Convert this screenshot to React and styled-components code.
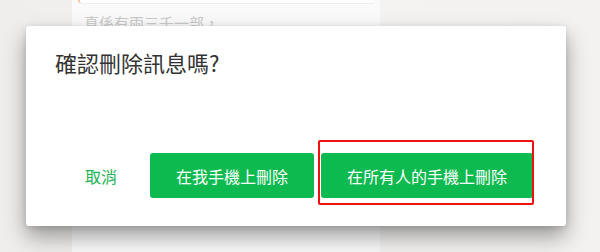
import React from "react";
import styled, { createGlobalStyle } from "styled-components";

const GlobalStyle = createGlobalStyle`
  html, body {
    margin: 0;
    padding: 0;
    background: #f2f1ef;
    font-family: "Noto Sans CJK TC", "Noto Sans", sans-serif;
  }
`;

const Page = styled.div`
  position: relative;
  width: 600px;
  height: 252px;
  overflow: hidden;
  background: linear-gradient(90deg, #efeeec 0%, #f4f3f1 40%, #f3f2f0 100%);
`;

const ChatColumn = styled.div`
  margin-left: 72px;
  width: 308px;
  height: 252px;
  background: #fafafa;
  display: flex;
  flex-direction: column;
`;

const QuoteBox = styled.div`
  margin: 0 6px;
  height: 3px;
  border-radius: 0 0 4px 4px;
  background: #ffffff;
  border-left: 2px solid #f6c3a8;
  box-shadow: 0 1px 0 #eeeeee;
`;

const FadedText = styled.div`
  margin: 10px 0 0 12px;
  font-size: 15px;
  line-height: 20px;
  color: #cacaca;
`;

const Dialog = styled.div`
  position: absolute;
  left: 26px;
  top: 26px;
  width: 540px;
  height: 200px;
  box-sizing: border-box;
  background: #ffffff;
  border-radius: 3px;
  box-shadow: 0 11px 22px rgba(0, 0, 0, 0.36), 0 2px 6px rgba(0, 0, 0, 0.12);
  padding: 21px 33px 28px 29px;
  display: flex;
  flex-direction: column;
  justify-content: space-between;
`;

const Title = styled.h2`
  margin: 0;
  font-size: 22px;
  line-height: 30px;
  font-weight: 400;
  color: #333333;
`;

const Footer = styled.div`
  display: flex;
  justify-content: flex-end;
  align-items: center;
  gap: 7px;
`;

const Button = styled.button`
  height: 45px;
  padding: 0 26px;
  border: none;
  border-radius: 3px;
  font-family: inherit;
  font-size: 16px;
  white-space: nowrap;
  cursor: pointer;
  background: ${p => (p.$primary ? "#0dba4f" : "transparent")};
  color: ${p => (p.$primary ? "#ffffff" : "#1fb556")};
`;

const Marked = styled.div`
  position: relative;
  display: flex;
`;

const Highlight = styled.div`
  position: absolute;
  left: -3px;
  right: -1px;
  top: -13px;
  bottom: -7px;
  border: 2px solid #f01010;
  border-radius: 2px;
  pointer-events: none;
`;

export default function App() {
  return (
    <>
      <GlobalStyle />
      <Page>
        <ChatColumn>
          <QuoteBox />
          <FadedText>真係有兩三千一部，</FadedText>
        </ChatColumn>
        <Dialog>
          <Title>確認刪除訊息嗎?</Title>
          <Footer>
            <Button>取消</Button>
            <Button $primary>在我手機上刪除</Button>
            <Marked>
              <Button $primary>在所有人的手機上刪除</Button>
              <Highlight />
            </Marked>
          </Footer>
        </Dialog>
      </Page>
    </>
  );
}
